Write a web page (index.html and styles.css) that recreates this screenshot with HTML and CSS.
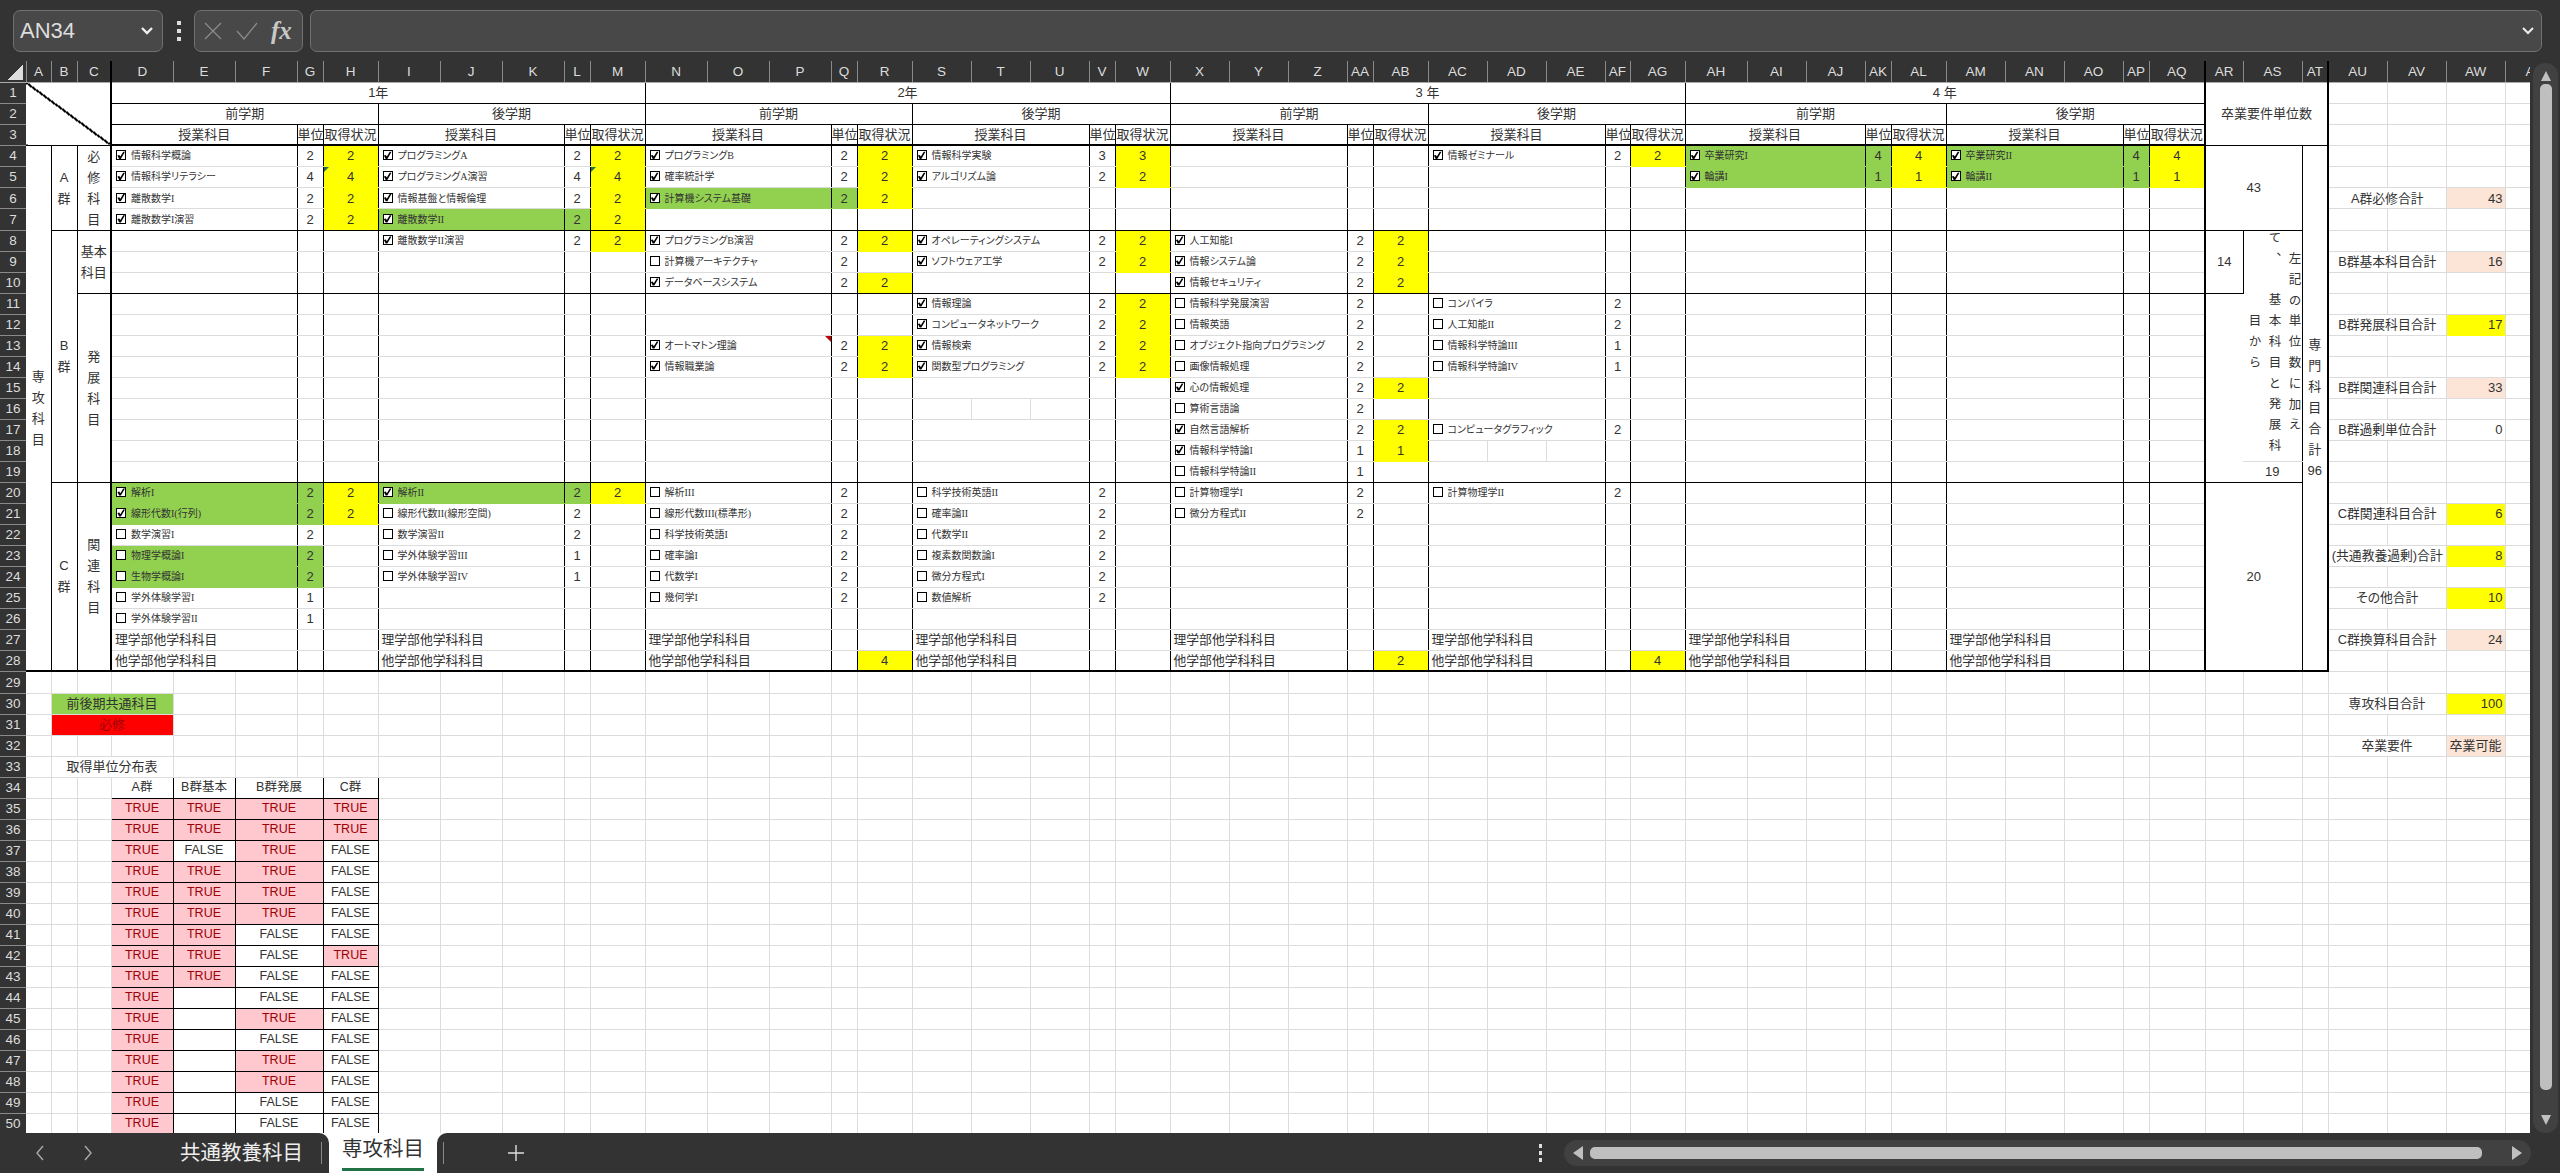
FILE: index.html
```html
<!DOCTYPE html>
<html lang="ja">
<head>
    <meta charset="UTF-8">
    <title>専攻科目</title>
    <link rel="stylesheet" href="styles.css">
</head>
<body>
<div class="toolbar">
    <div class="name-box"><span>AN34</span><svg width="14" height="10" viewBox="0 0 14 10"><path d="M2 2l5 5 5-5" fill="none" stroke="#eee" stroke-width="2.4"/></svg></div>
    <div class="dots"><i></i><i></i><i></i></div>
    <div class="fx-box">
        <svg width="20" height="20" viewBox="0 0 20 20"><path d="M2 2l16 16M18 2L2 18" fill="none" stroke="#8c8c8c" stroke-width="1.2"/></svg>
        <svg width="24" height="20" viewBox="0 0 24 20"><path d="M2 10l7 8L22 2" fill="none" stroke="#8c8c8c" stroke-width="1.2"/></svg>
        <span class="fx">fx</span>
    </div>
    <div class="formula"><svg width="14" height="10" viewBox="0 0 14 10"><path d="M2 2l5 5 5-5" fill="none" stroke="#eee" stroke-width="2"/></svg></div>
</div>
<div class="sheet-area">
<div class="sheet">
<table>
<colgroup>
<col class="w26">
<col class="w25 k"><col class="w26 k"><col class="w34 kk">
<col class="w62"><col class="w62"><col class="w62 k"><col class="w26 k"><col class="w55 k">
<col class="w62"><col class="w62"><col class="w62 k"><col class="w26 k"><col class="w55 k">
<col class="w62"><col class="w62"><col class="w62 k"><col class="w26 k"><col class="w55 k">
<col class="w59"><col class="w59"><col class="w59 k"><col class="w26 k"><col class="w55 k">
<col class="w59"><col class="w59"><col class="w59 k"><col class="w26 k"><col class="w55 k">
<col class="w59"><col class="w59"><col class="w59 k"><col class="w25 k"><col class="w55 k">
<col class="w62"><col class="w59"><col class="w59 k"><col class="w26 k"><col class="w55 k">
<col class="w59"><col class="w59"><col class="w59 k"><col class="w26 k"><col class="w56 kk">
<col class="w38"><col class="w59 k"><col class="w26 kk">
<col class="w59 l"><col class="w59 l"><col class="w59 l"><col class="w59">
</colgroup>
<thead>
<tr><th class="corner"><th>A<th>B<th>C<th>D<th>E<th>F<th>G<th>H<th>I<th>J<th>K<th>L<th>M<th>N<th>O<th>P<th>Q<th>R<th>S<th>T<th>U<th>V<th>W<th>X<th>Y<th>Z<th>AA<th>AB<th>AC<th>AD<th>AE<th>AF<th>AG<th>AH<th>AI<th>AJ<th>AK<th>AL<th>AM<th>AN<th>AO<th>AP<th>AQ<th>AR<th>AS<th>AT<th>AU<th>AV<th>AW<th>AX
</thead>
<tbody>
<tr class="k"><th>1<td colspan="3" rowspan="3" class="diag kkb"><td colspan="10">1年<td colspan="10">2年<td colspan="10">3 年<td colspan="10">4 年<td colspan="3" rowspan="3" class="kkb">卒業要件単位数<td class="g"><td class="g"><td class="g"><td class="g">
<tr class="k"><th>2<td colspan="5">前学期<td colspan="5">後学期<td colspan="5">前学期<td colspan="5">後学期<td colspan="5">前学期<td colspan="5">後学期<td colspan="5">前学期<td colspan="5">後学期<td class="g"><td class="g"><td class="g"><td class="g">
<tr class="kk"><th>3<td colspan="3">授業科目<td>単位<td>取得状況<td colspan="3">授業科目<td>単位<td>取得状況<td colspan="3">授業科目<td>単位<td>取得状況<td colspan="3">授業科目<td>単位<td>取得状況<td colspan="3">授業科目<td>単位<td>取得状況<td colspan="3">授業科目<td>単位<td>取得状況<td colspan="3">授業科目<td>単位<td>取得状況<td colspan="3">授業科目<td>単位<td>取得状況<td class="g"><td class="g"><td class="g"><td class="g">
<tr><th>4<td rowspan="25" class="kkb st">専<br>攻<br>科<br>目<td rowspan="4" class="kb st">A<br>群<td rowspan="4" class="kb st">必<br>修<br>科<br>目
<td colspan="3" class="s"><i class="on"></i>情報科学概論<td>2<td class="ye">2
<td colspan="3" class="s"><i class="on"></i>プログラミングA<td>2<td class="ye">2
<td colspan="3" class="s"><i class="on"></i>プログラミングB<td>2<td class="ye">2
<td colspan="3" class="s"><i class="on"></i>情報科学実験<td>3<td class="ye">3
<td colspan="3"><td><td>
<td colspan="3" class="s"><i class="on"></i>情報ゼミナール<td>2<td class="ye">2
<td colspan="3" class="s gr"><i class="on"></i>卒業研究I<td class="gr">4<td class="ye">4
<td colspan="3" class="s gr"><i class="on"></i>卒業研究II<td class="gr">4<td class="ye">4
<td colspan="2" rowspan="4" class="kb">43<td rowspan="25" class="kkb st">専<br>門<br>科<br>目<br>合<br>計<br>96<td><td><td><td>
<tr><th>5
<td colspan="3" class="s"><i class="on"></i>情報科学リテラシー<td>4<td class="ye tg">4
<td colspan="3" class="s"><i class="on"></i>プログラミングA演習<td>4<td class="ye tg">4
<td colspan="3" class="s"><i class="on"></i>確率統計学<td>2<td class="ye">2
<td colspan="3" class="s"><i class="on"></i>アルゴリズム論<td>2<td class="ye">2
<td colspan="3"><td><td>
<td colspan="3"><td><td>
<td colspan="3" class="s gr"><i class="on"></i>輪講I<td class="gr">1<td class="ye">1
<td colspan="3" class="s gr"><i class="on"></i>輪講II<td class="gr">1<td class="ye">1
<td><td><td><td>
<tr><th>6
<td colspan="3" class="s"><i class="on"></i>離散数学I<td>2<td class="ye">2
<td colspan="3" class="s"><i class="on"></i>情報基盤と情報倫理<td>2<td class="ye">2
<td colspan="3" class="s gr"><i class="on"></i>計算機システム基礎<td class="gr">2<td class="ye">2
<td colspan="3"><td><td>
<td colspan="3"><td><td>
<td colspan="3"><td><td>
<td colspan="3"><td><td>
<td colspan="3"><td><td>
<td colspan="2" class="lb">A群必修合計<td class="val pe">43<td>
<tr class="k"><th>7
<td colspan="3" class="s"><i class="on"></i>離散数学I演習<td>2<td class="ye">2
<td colspan="3" class="s gr"><i class="on"></i>離散数学II<td class="gr">2<td class="ye">2
<td colspan="3"><td><td>
<td colspan="3"><td><td>
<td colspan="3"><td><td>
<td colspan="3"><td><td>
<td colspan="3"><td><td>
<td colspan="3"><td><td>
<td class="g"><td class="g"><td class="g"><td class="g">
<tr><th>8<td rowspan="12" class="kb st">B<br>群<td rowspan="3" class="kb st">基本<br>科目
<td colspan="3"><td><td>
<td colspan="3" class="s"><i class="on"></i>離散数学II演習<td>2<td class="ye">2
<td colspan="3" class="s"><i class="on"></i>プログラミングB演習<td>2<td class="ye">2
<td colspan="3" class="s"><i class="on"></i>オペレーティングシステム<td>2<td class="ye">2
<td colspan="3" class="s"><i class="on"></i>人工知能I<td>2<td class="ye">2
<td colspan="3"><td><td>
<td colspan="3"><td><td>
<td colspan="3"><td><td>
<td rowspan="3" class="kb kr">14<td rowspan="11" class="vt"><div>左記の単位数に加え<br>て、　基本科目と発展科<br>目から</div><td><td><td><td>
<tr><th>9
<td colspan="3"><td><td>
<td colspan="3"><td><td>
<td colspan="3" class="s"><i></i>計算機アーキテクチャ<td>2<td>
<td colspan="3" class="s"><i class="on"></i>ソフトウェア工学<td>2<td class="ye">2
<td colspan="3" class="s"><i class="on"></i>情報システム論<td>2<td class="ye">2
<td colspan="3"><td><td>
<td colspan="3"><td><td>
<td colspan="3"><td><td>
<td colspan="2" class="lb">B群基本科目合計<td class="val pe">16<td>
<tr class="k"><th>10
<td colspan="3"><td><td>
<td colspan="3"><td><td>
<td colspan="3" class="s"><i class="on"></i>データベースシステム<td>2<td class="ye">2
<td colspan="3"><td><td>
<td colspan="3" class="s"><i class="on"></i>情報セキュリティ<td>2<td class="ye">2
<td colspan="3"><td><td>
<td colspan="3"><td><td>
<td colspan="3"><td><td>
<td class="g"><td class="g"><td class="g"><td class="g">
<tr><th>11<td rowspan="9" class="kb st">発<br>展<br>科<br>目
<td colspan="3"><td><td>
<td colspan="3"><td><td>
<td colspan="3"><td><td>
<td colspan="3" class="s"><i class="on"></i>情報理論<td>2<td class="ye">2
<td colspan="3" class="s"><i></i>情報科学発展演習<td>2<td>
<td colspan="3" class="s"><i></i>コンパイラ<td>2<td>
<td colspan="3"><td><td>
<td colspan="3"><td><td>
<td rowspan="9" class="kb"><td><td><td><td>
<tr><th>12
<td colspan="3"><td><td>
<td colspan="3"><td><td>
<td colspan="3"><td><td>
<td colspan="3" class="s"><i class="on"></i>コンピュータネットワーク<td>2<td class="ye">2
<td colspan="3" class="s"><i></i>情報英語<td>2<td>
<td colspan="3" class="s"><i></i>人工知能II<td>2<td>
<td colspan="3"><td><td>
<td colspan="3"><td><td>
<td colspan="2" class="lb">B群発展科目合計<td class="val ye">17<td>
<tr><th>13
<td colspan="3"><td><td>
<td colspan="3"><td><td>
<td colspan="3" class="s tr"><i class="on"></i>オートマトン理論<td>2<td class="ye">2
<td colspan="3" class="s"><i class="on"></i>情報検索<td>2<td class="ye">2
<td colspan="3" class="s"><i></i>オブジェクト指向プログラミング<td>2<td>
<td colspan="3" class="s"><i></i>情報科学特論III<td>1<td>
<td colspan="3"><td><td>
<td colspan="3"><td><td>
<td><td><td><td>
<tr><th>14
<td colspan="3"><td><td>
<td colspan="3"><td><td>
<td colspan="3" class="s"><i class="on"></i>情報職業論<td>2<td class="ye">2
<td colspan="3" class="s"><i class="on"></i>関数型プログラミング<td>2<td class="ye">2
<td colspan="3" class="s"><i></i>画像情報処理<td>2<td>
<td colspan="3" class="s"><i></i>情報科学特論IV<td>1<td>
<td colspan="3"><td><td>
<td colspan="3"><td><td>
<td><td><td><td>
<tr><th>15
<td colspan="3"><td><td>
<td colspan="3"><td><td>
<td colspan="3"><td><td>
<td colspan="3"><td><td>
<td colspan="3" class="s"><i class="on"></i>心の情報処理<td>2<td class="ye">2
<td colspan="3"><td><td>
<td colspan="3"><td><td>
<td colspan="3"><td><td>
<td colspan="2" class="lb">B群関連科目合計<td class="val pe">33<td>
<tr><th>16
<td colspan="3"><td><td>
<td colspan="3"><td><td>
<td colspan="3"><td><td>
<td class="vl"><td class="vl"><td><td><td>
<td colspan="3" class="s"><i></i>算術言語論<td>2<td>
<td colspan="3"><td><td>
<td colspan="3"><td><td>
<td colspan="3"><td><td>
<td><td><td><td>
<tr><th>17
<td colspan="3"><td><td>
<td colspan="3"><td><td>
<td colspan="3"><td><td>
<td colspan="3"><td><td>
<td colspan="3" class="s"><i class="on"></i>自然言語解析<td>2<td class="ye">2
<td colspan="3" class="s"><i></i>コンピュータグラフィック<td>2<td>
<td colspan="3"><td><td>
<td colspan="3"><td><td>
<td colspan="2" class="lb">B群過剰単位合計<td class="val">0<td>
<tr><th>18
<td colspan="3"><td><td>
<td colspan="3"><td><td>
<td colspan="3"><td><td>
<td colspan="3"><td><td>
<td colspan="3" class="s"><i class="on"></i>情報科学特論I<td>1<td class="ye">1
<td class="vl"><td class="vl"><td><td><td>
<td colspan="3"><td><td>
<td colspan="3"><td><td>
<td><td><td><td>
<tr class="k"><th>19
<td colspan="3"><td><td>
<td colspan="3"><td><td>
<td colspan="3"><td><td>
<td colspan="3"><td><td>
<td colspan="3" class="s"><i></i>情報科学特論II<td>1<td>
<td colspan="3"><td><td>
<td colspan="3"><td><td>
<td colspan="3"><td><td>
<td>19<td class="g"><td class="g"><td class="g"><td class="g">
<tr><th>20<td rowspan="9" class="kkb st">C<br>群<td rowspan="9" class="kkb st">関<br>連<br>科<br>目
<td colspan="3" class="s gr"><i class="on"></i>解析I<td class="gr">2<td class="ye">2
<td colspan="3" class="s gr"><i class="on"></i>解析II<td class="gr">2<td class="ye">2
<td colspan="3" class="s"><i></i>解析III<td>2<td>
<td colspan="3" class="s"><i></i>科学技術英語II<td>2<td>
<td colspan="3" class="s"><i></i>計算物理学I<td>2<td>
<td colspan="3" class="s"><i></i>計算物理学II<td>2<td>
<td colspan="3"><td><td>
<td colspan="3"><td><td>
<td colspan="2" rowspan="9" class="kkb">20<td><td><td><td>
<tr><th>21
<td colspan="3" class="s gr"><i class="on"></i>線形代数I(行列)<td class="gr">2<td class="ye">2
<td colspan="3" class="s"><i></i>線形代数II(線形空間)<td>2<td>
<td colspan="3" class="s"><i></i>線形代数III(標準形)<td>2<td>
<td colspan="3" class="s"><i></i>確率論II<td>2<td>
<td colspan="3" class="s"><i></i>微分方程式II<td>2<td>
<td colspan="3"><td><td>
<td colspan="3"><td><td>
<td colspan="3"><td><td>
<td colspan="2" class="lb">C群関連科目合計<td class="val ye">6<td>
<tr><th>22
<td colspan="3" class="s"><i></i>数学演習I<td>2<td>
<td colspan="3" class="s"><i></i>数学演習II<td>2<td>
<td colspan="3" class="s"><i></i>科学技術英語I<td>2<td>
<td colspan="3" class="s"><i></i>代数学II<td>2<td>
<td colspan="3"><td><td>
<td colspan="3"><td><td>
<td colspan="3"><td><td>
<td colspan="3"><td><td>
<td><td><td><td>
<tr><th>23
<td colspan="3" class="s gr"><i></i>物理学概論I<td class="gr">2<td>
<td colspan="3" class="s"><i></i>学外体験学習III<td>1<td>
<td colspan="3" class="s"><i></i>確率論I<td>2<td>
<td colspan="3" class="s"><i></i>複素数関数論I<td>2<td>
<td colspan="3"><td><td>
<td colspan="3"><td><td>
<td colspan="3"><td><td>
<td colspan="3"><td><td>
<td colspan="2" class="lb">(共通教養過剰)合計<td class="val ye">8<td>
<tr><th>24
<td colspan="3" class="s gr"><i></i>生物学概論I<td class="gr">2<td>
<td colspan="3" class="s"><i></i>学外体験学習IV<td>1<td>
<td colspan="3" class="s"><i></i>代数学I<td>2<td>
<td colspan="3" class="s"><i></i>微分方程式I<td>2<td>
<td colspan="3"><td><td>
<td colspan="3"><td><td>
<td colspan="3"><td><td>
<td colspan="3"><td><td>
<td><td><td><td>
<tr><th>25
<td colspan="3" class="s"><i></i>学外体験学習I<td>1<td>
<td colspan="3"><td><td>
<td colspan="3" class="s"><i></i>幾何学I<td>2<td>
<td colspan="3" class="s"><i></i>数値解析<td>2<td>
<td colspan="3"><td><td>
<td colspan="3"><td><td>
<td colspan="3"><td><td>
<td colspan="3"><td><td>
<td colspan="2" class="lb">その他合計<td class="val ye">10<td>
<tr><th>26
<td colspan="3" class="s"><i></i>学外体験学習II<td>1<td>
<td colspan="3"><td><td>
<td colspan="3"><td><td>
<td colspan="3"><td><td>
<td colspan="3"><td><td>
<td colspan="3"><td><td>
<td colspan="3"><td><td>
<td colspan="3"><td><td>
<td><td><td><td>
<tr><th>27
<td colspan="3" class="o">理学部他学科科目<td><td>
<td colspan="3" class="o">理学部他学科科目<td><td>
<td colspan="3" class="o">理学部他学科科目<td><td>
<td colspan="3" class="o">理学部他学科科目<td><td>
<td colspan="3" class="o">理学部他学科科目<td><td>
<td colspan="3" class="o">理学部他学科科目<td><td>
<td colspan="3" class="o">理学部他学科科目<td><td>
<td colspan="3" class="o">理学部他学科科目<td><td>
<td colspan="2" class="lb">C群換算科目合計<td class="val pe">24<td>
<tr class="kk"><th>28
<td colspan="3" class="o">他学部他学科科目<td><td>
<td colspan="3" class="o">他学部他学科科目<td><td>
<td colspan="3" class="o">他学部他学科科目<td><td class="ye">4
<td colspan="3" class="o">他学部他学科科目<td><td>
<td colspan="3" class="o">他学部他学科科目<td><td class="ye">2
<td colspan="3" class="o">他学部他学科科目<td><td class="ye">4
<td colspan="3" class="o">他学部他学科科目<td><td>
<td colspan="3" class="o">他学部他学科科目<td><td>
<td class="g"><td class="g"><td class="g"><td class="g">
</tbody>
</table>
<table class="low">
<colgroup>
<col class="w26">
<col class="w25"><col class="w26"><col class="w34">
<col class="w62"><col class="w62"><col class="w62"><col class="w26"><col class="w55">
<col class="w62"><col class="w62"><col class="w62"><col class="w26"><col class="w55">
<col class="w62"><col class="w62"><col class="w62"><col class="w26"><col class="w55">
<col class="w59"><col class="w59"><col class="w59"><col class="w26"><col class="w55">
<col class="w59"><col class="w59"><col class="w59"><col class="w26"><col class="w55">
<col class="w59"><col class="w59"><col class="w59"><col class="w25"><col class="w55">
<col class="w62"><col class="w59"><col class="w59"><col class="w26"><col class="w55">
<col class="w59"><col class="w59"><col class="w59"><col class="w26"><col class="w56">
<col class="w38"><col class="w59"><col class="w26">
<col class="w59"><col class="w59"><col class="w59"><col class="w59">
</colgroup>
<tbody>
<tr><th>29<td><td><td><td><td><td><td><td><td><td><td>
<td><td><td><td><td><td><td><td><td><td>
<td><td><td><td><td><td><td><td><td><td>
<td><td><td><td><td><td><td><td><td><td>
<td><td><td><td><td><td><td><td><td><td>
<tr><th>30<td><td colspan="3" class="gr">前後期共通科目
<td><td><td><td><td><td><td><td><td><td>
<td><td><td><td><td><td><td><td><td><td>
<td><td><td><td><td><td><td><td><td><td>
<td><td><td><td><td><td><td><td><td><td>
<td><td>
<td colspan="2" class="lb">専攻科目合計<td class="val ye">100<td>
<tr><th>31<td><td colspan="3" class="rd">必修
<td><td><td><td><td><td><td><td><td><td>
<td><td><td><td><td><td><td><td><td><td>
<td><td><td><td><td><td><td><td><td><td>
<td><td><td><td><td><td><td><td><td><td>
<td><td><td><td><td><td>
<tr><th>32<td>
<td><td><td><td><td><td><td><td><td><td>
<td><td><td><td><td><td><td><td><td><td>
<td><td><td><td><td><td><td><td><td><td>
<td><td><td><td><td><td><td><td><td><td>
<td><td><td><td><td>
<td colspan="2" class="lb">卒業要件<td class="pe">卒業可能<td>
<tr><th>33<td><td colspan="3">取得単位分布表
<td><td><td><td><td><td><td><td><td><td>
<td><td><td><td><td><td><td><td><td><td>
<td><td><td><td><td><td><td><td><td><td>
<td><td><td><td><td><td><td><td><td><td>
<td><td><td><td><td><td>
<tr><th>34<td><td><td><td class="bx">A群<td class="bx">B群基本<td colspan="2" class="bx">B群発展<td class="bx">C群
<td><td><td><td><td><td><td><td><td><td>
<td><td><td><td><td><td><td><td><td><td>
<td><td><td><td><td><td><td><td><td><td>
<td><td><td><td><td><td><td><td><td><td>
<td><td>
<tr><th>35<td><td><td><td class="bx pk">TRUE<td class="bx pk">TRUE<td colspan="2" class="bx pk">TRUE<td class="bx pk">TRUE
<td><td><td><td><td><td><td><td><td><td>
<td><td><td><td><td><td><td><td><td><td>
<td><td><td><td><td><td><td><td><td><td>
<td><td><td><td><td><td><td><td><td><td>
<td><td>
<tr><th>36<td><td><td><td class="bx pk">TRUE<td class="bx pk">TRUE<td colspan="2" class="bx pk">TRUE<td class="bx pk">TRUE
<td><td><td><td><td><td><td><td><td><td>
<td><td><td><td><td><td><td><td><td><td>
<td><td><td><td><td><td><td><td><td><td>
<td><td><td><td><td><td><td><td><td><td>
<td><td>
<tr><th>37<td><td><td><td class="bx pk">TRUE<td class="bx">FALSE<td colspan="2" class="bx pk">TRUE<td class="bx">FALSE
<td><td><td><td><td><td><td><td><td><td>
<td><td><td><td><td><td><td><td><td><td>
<td><td><td><td><td><td><td><td><td><td>
<td><td><td><td><td><td><td><td><td><td>
<td><td>
<tr><th>38<td><td><td><td class="bx pk">TRUE<td class="bx pk">TRUE<td colspan="2" class="bx pk">TRUE<td class="bx">FALSE
<td><td><td><td><td><td><td><td><td><td>
<td><td><td><td><td><td><td><td><td><td>
<td><td><td><td><td><td><td><td><td><td>
<td><td><td><td><td><td><td><td><td><td>
<td><td>
<tr><th>39<td><td><td><td class="bx pk">TRUE<td class="bx pk">TRUE<td colspan="2" class="bx pk">TRUE<td class="bx">FALSE
<td><td><td><td><td><td><td><td><td><td>
<td><td><td><td><td><td><td><td><td><td>
<td><td><td><td><td><td><td><td><td><td>
<td><td><td><td><td><td><td><td><td><td>
<td><td>
<tr><th>40<td><td><td><td class="bx pk">TRUE<td class="bx pk">TRUE<td colspan="2" class="bx pk">TRUE<td class="bx">FALSE
<td><td><td><td><td><td><td><td><td><td>
<td><td><td><td><td><td><td><td><td><td>
<td><td><td><td><td><td><td><td><td><td>
<td><td><td><td><td><td><td><td><td><td>
<td><td>
<tr><th>41<td><td><td><td class="bx pk">TRUE<td class="bx pk">TRUE<td colspan="2" class="bx">FALSE<td class="bx">FALSE
<td><td><td><td><td><td><td><td><td><td>
<td><td><td><td><td><td><td><td><td><td>
<td><td><td><td><td><td><td><td><td><td>
<td><td><td><td><td><td><td><td><td><td>
<td><td>
<tr><th>42<td><td><td><td class="bx pk">TRUE<td class="bx pk">TRUE<td colspan="2" class="bx">FALSE<td class="bx pk">TRUE
<td><td><td><td><td><td><td><td><td><td>
<td><td><td><td><td><td><td><td><td><td>
<td><td><td><td><td><td><td><td><td><td>
<td><td><td><td><td><td><td><td><td><td>
<td><td>
<tr><th>43<td><td><td><td class="bx pk">TRUE<td class="bx pk">TRUE<td colspan="2" class="bx">FALSE<td class="bx">FALSE
<td><td><td><td><td><td><td><td><td><td>
<td><td><td><td><td><td><td><td><td><td>
<td><td><td><td><td><td><td><td><td><td>
<td><td><td><td><td><td><td><td><td><td>
<td><td>
<tr><th>44<td><td><td><td class="bx pk">TRUE<td class="bx"><td colspan="2" class="bx">FALSE<td class="bx">FALSE
<td><td><td><td><td><td><td><td><td><td>
<td><td><td><td><td><td><td><td><td><td>
<td><td><td><td><td><td><td><td><td><td>
<td><td><td><td><td><td><td><td><td><td>
<td><td>
<tr><th>45<td><td><td><td class="bx pk">TRUE<td class="bx"><td colspan="2" class="bx pk">TRUE<td class="bx">FALSE
<td><td><td><td><td><td><td><td><td><td>
<td><td><td><td><td><td><td><td><td><td>
<td><td><td><td><td><td><td><td><td><td>
<td><td><td><td><td><td><td><td><td><td>
<td><td>
<tr><th>46<td><td><td><td class="bx pk">TRUE<td class="bx"><td colspan="2" class="bx">FALSE<td class="bx">FALSE
<td><td><td><td><td><td><td><td><td><td>
<td><td><td><td><td><td><td><td><td><td>
<td><td><td><td><td><td><td><td><td><td>
<td><td><td><td><td><td><td><td><td><td>
<td><td>
<tr><th>47<td><td><td><td class="bx pk">TRUE<td class="bx"><td colspan="2" class="bx pk">TRUE<td class="bx">FALSE
<td><td><td><td><td><td><td><td><td><td>
<td><td><td><td><td><td><td><td><td><td>
<td><td><td><td><td><td><td><td><td><td>
<td><td><td><td><td><td><td><td><td><td>
<td><td>
<tr><th>48<td><td><td><td class="bx pk">TRUE<td class="bx"><td colspan="2" class="bx pk">TRUE<td class="bx">FALSE
<td><td><td><td><td><td><td><td><td><td>
<td><td><td><td><td><td><td><td><td><td>
<td><td><td><td><td><td><td><td><td><td>
<td><td><td><td><td><td><td><td><td><td>
<td><td>
<tr><th>49<td><td><td><td class="bx pk">TRUE<td class="bx"><td colspan="2" class="bx">FALSE<td class="bx">FALSE
<td><td><td><td><td><td><td><td><td><td>
<td><td><td><td><td><td><td><td><td><td>
<td><td><td><td><td><td><td><td><td><td>
<td><td><td><td><td><td><td><td><td><td>
<td><td>
<tr><th>50<td><td><td><td class="bx pk">TRUE<td class="bx"><td colspan="2" class="bx">FALSE<td class="bx">FALSE
<td><td><td><td><td><td><td><td><td><td>
<td><td><td><td><td><td><td><td><td><td>
<td><td><td><td><td><td><td><td><td><td>
<td><td><td><td><td><td><td><td><td><td>
<td><td>
</tbody>
</table>
</div>
<div class="vscroll">
    <div class="vtrack">
        <svg class="varrow" width="12" height="10" viewBox="0 0 12 10"><path d="M6 0l5 10H1z" fill="#bfbfbf"/></svg>
        <div class="vthumb"></div>
        <svg class="varrow" width="12" height="10" viewBox="0 0 12 10"><path d="M6 10L1 0h10z" fill="#bfbfbf"/></svg>
    </div>
</div>
</div>
<div class="tabs">
    <div class="tabs-left">
        <svg class="nav" width="12" height="16" viewBox="0 0 12 16"><path d="M9 1L3 8l6 7" fill="none" stroke="#aaa" stroke-width="1.4"/></svg>
        <svg class="nav nav-next" width="12" height="16" viewBox="0 0 12 16"><path d="M3 1l6 7-6 7" fill="none" stroke="#aaa" stroke-width="1.4"/></svg>
        <span class="tab-name">共通教養科目</span>
        <span class="tab-sep"></span>
    </div>
    <div class="tab-active"><span>専攻科目</span></div>
    <div class="tabs-right">
        <span class="tab-sep"></span>
        <svg class="plus" width="18" height="18" viewBox="0 0 18 18"><path d="M9 1v16M1 9h16" stroke="#ddd" stroke-width="1.4"/></svg>
        <div class="dots dots-small"><i></i><i></i><i></i></div>
        <div class="htrack">
            <svg width="10" height="14" viewBox="0 0 10 14"><path d="M0 7l10-7v14z" fill="#bfbfbf"/></svg>
            <div class="hthumb"></div>
            <svg width="10" height="14" viewBox="0 0 10 14"><path d="M10 7L0 0v14z" fill="#bfbfbf"/></svg>
        </div>
    </div>
</div>
</body>
</html>
```

FILE: styles.css
```css
* {
    box-sizing: border-box;
}
body {
    margin: 0;
    width: 2560px;
    height: 1173px;
    overflow: hidden;
    display: flex;
    flex-direction: column;
    background-color: #333;
    font-family: "Liberation Sans", "Noto Sans CJK JP", sans-serif;
    color: #333;
}

/* formula bar */
.toolbar {
    height: 61px;
    flex: none;
    display: flex;
    align-items: center;
    padding: 0 18px 0 13px;
}
.name-box {
    width: 150px;
    height: 42px;
    display: flex;
    align-items: center;
    justify-content: space-between;
    padding: 0 8px 0 6px;
    background-color: #484848;
    border: 1px solid #707070;
    border-radius: 7px;
    color: #ddd;
    font-size: 22px;
}
.dots {
    width: 31px;
    display: flex;
    flex-direction: column;
    align-items: center;
    gap: 4px;
}
.dots i {
    width: 4px;
    height: 4px;
    background-color: #ddd;
}
.fx-box {
    width: 109px;
    height: 42px;
    display: flex;
    align-items: center;
    gap: 12px;
    padding-left: 8px;
    background-color: #484848;
    border: 1px solid #707070;
    border-radius: 7px;
}
.fx {
    font-family: "Liberation Serif", serif;
    font-style: italic;
    font-weight: bold;
    font-size: 25px;
    color: #c8c8c8;
}
.formula {
    flex: 1;
    height: 42px;
    margin-left: 7px;
    display: flex;
    align-items: center;
    justify-content: flex-end;
    padding-right: 6px;
    background-color: #484848;
    border: 1px solid #707070;
    border-radius: 7px;
}

/* grid */
.sheet-area {
    flex: 1;
    display: flex;
    min-height: 0;
}
.sheet {
    width: 2530px;
    overflow: hidden;
    background-color: #fff;
}
table {
    width: 2564px;
    table-layout: fixed;
    border-collapse: collapse;
    background-color: #fff;
    font-size: 13px;
}
tr {
    height: 21px;
}
th {
    padding: 0;
    background-color: #333;
    color: #ddd;
    font-weight: normal;
    font-size: 13.5px;
    line-height: 15px;
    border-bottom: 1px solid #8a8a8a;
}
thead th {
    border-right: 1px solid #8a8a8a;
    border-bottom: 1px solid #aaa;
}
.corner {
    background-image: linear-gradient(to bottom right, transparent 50%, #ddd 50%);
    background-size: 15px 15px;
    background-position: 8px 4px;
    background-repeat: no-repeat;
}
td {
    padding: 0;
    text-align: center;
    white-space: nowrap;
    line-height: 15px;
    border-bottom: 1px solid #dcdcdc;
    font-feature-settings: "palt";
}
col.k { border-right: 1px solid #000; }
col.kk { border-right: 2px solid #000; }
col.l { border-right: 1px solid #dcdcdc; }
.w25 { width: 25px; }
.w26 { width: 26px; }
.w34 { width: 34px; }
.w38 { width: 38px; }
.w55 { width: 55px; }
.w56 { width: 56px; }
.w59 { width: 59px; }
.w62 { width: 62px; }

tr.k td { border-bottom: 1px solid #000; }
tr.kk td { border-bottom: 2px solid #000; }
tr.k td.g, tr.kk td.g { border-bottom: 1px solid #dcdcdc; }
td.kb { border-bottom: 1px solid #000; }
td.kkb { border-bottom: 2px solid #000; }
td.kr { border-right: 1px solid #000; }
td.vl { border-right: 1px solid #dcdcdc; }
td.st { line-height: 21px; }
td.diag {
    background-image: linear-gradient(to top right, transparent calc(50% - 1px), #000 calc(50% - 1px), #000 calc(50% + 1px), transparent calc(50% + 1px));
}

/* subject cells */
td.s {
    text-align: left;
    padding-left: 4px;
    font-family: "Liberation Serif", "Noto Sans CJK JP", serif;
    font-size: 10px;
}
td.s i {
    display: inline-block;
    position: relative;
    width: 10px;
    height: 10px;
    margin-right: 5px;
    vertical-align: -1px;
    background-color: #fff;
    border: 1px solid #000;
}
td.s i.on::after {
    content: "";
    position: absolute;
    left: 0;
    top: 0;
    width: 8px;
    height: 8px;
    background-color: #000;
    clip-path: polygon(5% 50%, 28% 45%, 42% 65%, 78% 5%, 100% 5%, 48% 95%, 28% 95%);
}
td.o {
    text-align: left;
    padding-left: 3px;
    font-size: 12.8px;
}
td.tg, td.tr {
    position: relative;
}
td.tg::before {
    content: "";
    position: absolute;
    left: 0;
    top: 0;
    border-top: 5px solid #217346;
    border-right: 5px solid transparent;
}
td.tr::before {
    content: "";
    position: absolute;
    right: 0;
    top: 0;
    border-top: 6px solid #c00000;
    border-left: 6px solid transparent;
}

/* fills */
td.ye { background-color: #ff0; border-bottom-color: #ff0; }
td.gr { background-color: #92d050; border-bottom-color: #92d050; }
td.pe { background-color: #fce4d6; }
td.pk { background-color: #ffc7ce; color: #9c0006; }
td.rd { background-color: #f00; color: #9c0006; }
td.lb { font-size: 12.8px; }
td.val { text-align: right; padding-right: 2px; }

/* vertical note */
td.vt {
    text-align: left;
    font-size: 12.5px;
}
td.vt div {
    writing-mode: vertical-rl;
    display: inline-block;
    text-align: center;
    line-height: 20px;
    letter-spacing: 8.3px;
    vertical-align: middle;
}

/* rows below the main table */
.low td {
    border-right: 1px solid #dcdcdc;
    border-bottom: 1px solid #dcdcdc;
}
.low td.bx {
    border: 1px solid #000;
    font-size: 12.5px;
}

/* vertical scroll bar */
.vscroll {
    width: 30px;
    padding: 2px 2px 0 3px;
}
.vtrack {
    height: 100%;
    display: flex;
    flex-direction: column;
    align-items: center;
    padding-top: 8px;
    padding-bottom: 8px;
    background-color: #414141;
    border-radius: 12px;
}
.vthumb {
    flex: 1;
    width: 12px;
    margin: 3px 0 25px;
    background-color: #bfbfbf;
    border-radius: 5px;
}
.varrow {
    flex: none;
}

/* sheet tabs */
.tabs {
    height: 40px;
    flex: none;
    display: flex;
    background-color: #fff;
}
.tabs-left {
    width: 329px;
    display: flex;
    align-items: center;
    padding-left: 34px;
    background-color: #333;
    border-top-right-radius: 10px;
}
.nav-next {
    margin-left: 36px;
}
.tab-name {
    margin-left: 86px;
    color: #eee;
    font-size: 20.5px;
    line-height: 40px;
}
.tab-sep {
    width: 1px;
    height: 22px;
    background-color: #888;
}
.tabs-left .tab-sep {
    margin-left: 18px;
}
.tab-active {
    width: 108px;
    padding: 0 13px;
    background-color: #fff;
}
.tab-active span {
    display: block;
    height: 38px;
    line-height: 32px;
    border-bottom: 3px solid #217346;
    color: #333;
    font-size: 20.5px;
    white-space: nowrap;
}
.tabs-right {
    flex: 1;
    display: flex;
    align-items: center;
    padding-left: 6px;
    background-color: #333;
    border-top-left-radius: 10px;
}
.plus {
    margin-left: 63px;
}
.dots-small {
    width: 4px;
    margin-left: 1013px;
    gap: 3px;
}
.dots-small i {
    width: 3px;
    height: 4px;
}
.htrack {
    width: 967px;
    height: 26px;
    margin-left: 22px;
    display: flex;
    align-items: center;
    justify-content: space-between;
    padding: 0 9px;
    background-color: #414141;
    border-radius: 13px;
}
.hthumb {
    width: 892px;
    height: 12px;
    margin-left: 7px;
    margin-right: auto;
    background-color: #bfbfbf;
    border-radius: 5px;
}
```
